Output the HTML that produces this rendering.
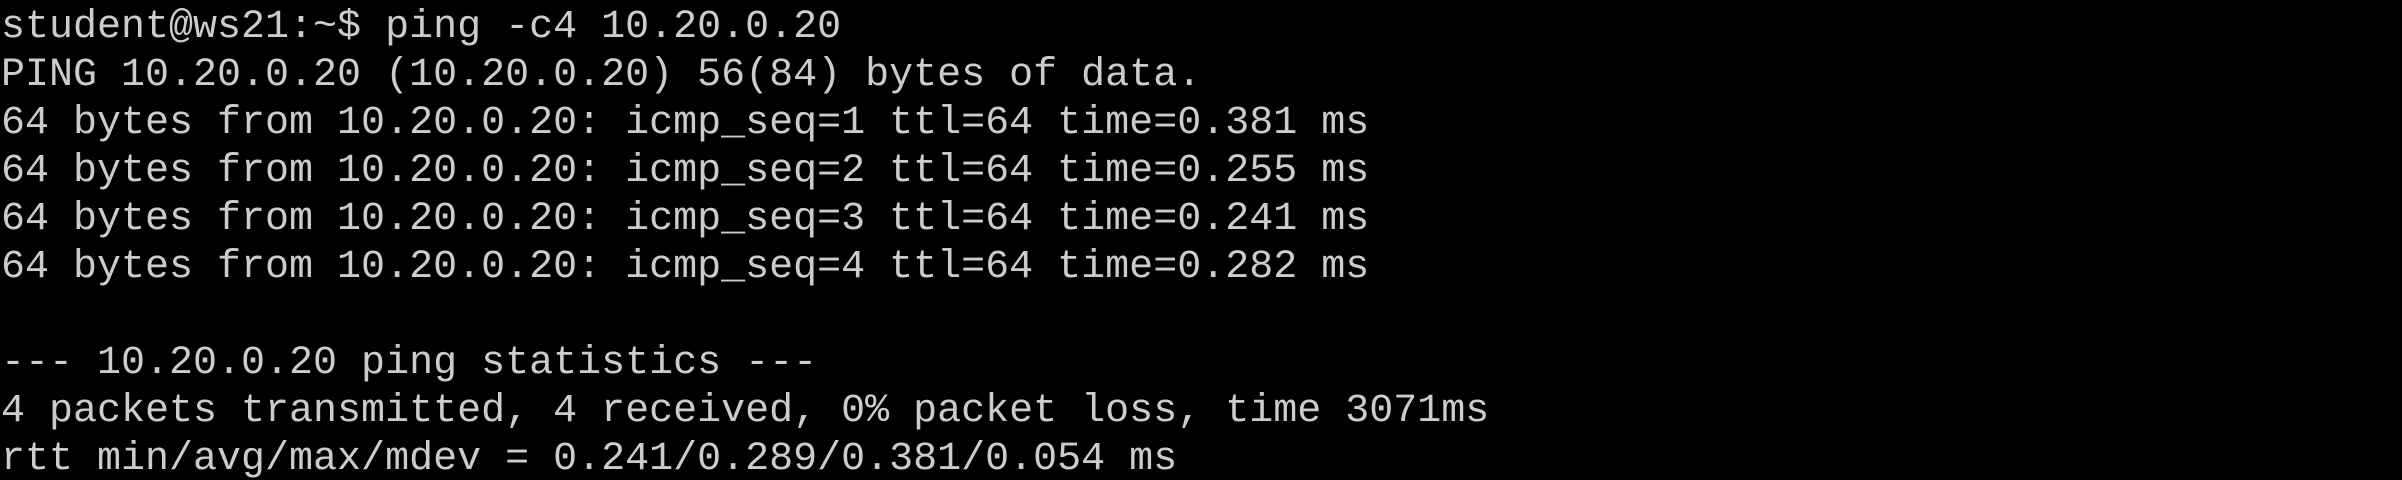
<!DOCTYPE html>
<html><head><meta charset="utf-8"><style>
html,body{margin:0;padding:0;background:#000;width:2402px;height:480px;overflow:hidden}
pre{margin:0;padding:4px 0 0 1px;font-family:"Liberation Mono","DejaVu Sans Mono",monospace;font-size:40px;line-height:48px;color:#cccccc;letter-spacing:0}
</style></head><body><pre>student@ws21:~$ ping -c4 10.20.0.20
PING 10.20.0.20 (10.20.0.20) 56(84) bytes of data.
64 bytes from 10.20.0.20: icmp_seq=1 ttl=64 time=0.381 ms
64 bytes from 10.20.0.20: icmp_seq=2 ttl=64 time=0.255 ms
64 bytes from 10.20.0.20: icmp_seq=3 ttl=64 time=0.241 ms
64 bytes from 10.20.0.20: icmp_seq=4 ttl=64 time=0.282 ms

--- 10.20.0.20 ping statistics ---
4 packets transmitted, 4 received, 0% packet loss, time 3071ms
rtt min/avg/max/mdev = 0.241/0.289/0.381/0.054 ms</pre></body></html>
